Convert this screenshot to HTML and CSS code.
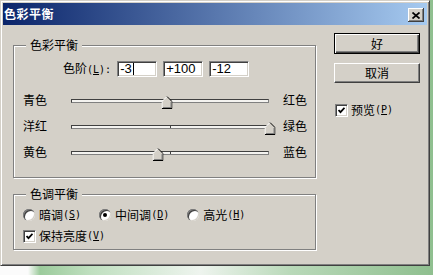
FILE: index.html
```html
<!DOCTYPE html>
<html lang="zh-CN">
<head>
    <meta charset="UTF-8">
    <title>色彩平衡</title>
    <link rel="stylesheet" href="styles.css">
</head>
<body>
    <div class="window">
        <div class="titlebar">
            <span class="title">色彩平衡</span>
            <div class="close">
                <svg width="8" height="7" viewBox="0 0 8 7"><path d="M0.5 0.5 L7.5 6.5 M7.5 0.5 L0.5 6.5" stroke="#000" stroke-width="1.7"/></svg>
            </div>
        </div>
        <div class="dialog">
            <div class="main">
                <fieldset class="group group-color">
                    <legend>色彩平衡</legend>
                    <div class="levels">
                        <label>色阶<span class="en">(<u>L</u>):</span></label>
                        <div class="field">-3<span class="caret"></span></div>
                        <div class="field">+100</div>
                        <div class="field">-12</div>
                    </div>
                    <div class="slider-row">
                        <span>青色</span>
                        <div class="slider">
                            <div class="track"><span class="tick"></span></div>
                            <div class="thumb" style="left: 48.5%">
                                <svg width="11" height="13" viewBox="0 0 11 13"><path d="M0.5 12.5 V5.5 L5.5 0.5 L10.5 5.5 V12.5 Z" fill="#d4d0c8"/><path d="M0.5 12 V5.5 L5.5 0.5" fill="none" stroke="#fff"/><path d="M5.5 0.5 L10.5 5.5 V12.5 H0.5" fill="none" stroke="#000"/><path d="M9.5 6 V11.5 H1.5" fill="none" stroke="#808080"/></svg>
                            </div>
                        </div>
                        <span class="right">红色</span>
                    </div>
                    <div class="slider-row">
                        <span>洋红</span>
                        <div class="slider">
                            <div class="track"><span class="tick"></span></div>
                            <div class="thumb" style="left: 100%">
                                <svg width="11" height="13" viewBox="0 0 11 13"><path d="M0.5 12.5 V5.5 L5.5 0.5 L10.5 5.5 V12.5 Z" fill="#d4d0c8"/><path d="M0.5 12 V5.5 L5.5 0.5" fill="none" stroke="#fff"/><path d="M5.5 0.5 L10.5 5.5 V12.5 H0.5" fill="none" stroke="#000"/><path d="M9.5 6 V11.5 H1.5" fill="none" stroke="#808080"/></svg>
                            </div>
                        </div>
                        <span class="right">绿色</span>
                    </div>
                    <div class="slider-row">
                        <span>黄色</span>
                        <div class="slider">
                            <div class="track"><span class="tick"></span></div>
                            <div class="thumb" style="left: 44%">
                                <svg width="11" height="13" viewBox="0 0 11 13"><path d="M0.5 12.5 V5.5 L5.5 0.5 L10.5 5.5 V12.5 Z" fill="#d4d0c8"/><path d="M0.5 12 V5.5 L5.5 0.5" fill="none" stroke="#fff"/><path d="M5.5 0.5 L10.5 5.5 V12.5 H0.5" fill="none" stroke="#000"/><path d="M9.5 6 V11.5 H1.5" fill="none" stroke="#808080"/></svg>
                            </div>
                        </div>
                        <span class="right">蓝色</span>
                    </div>
                </fieldset>

                <fieldset class="group group-tone">
                    <legend>色调平衡</legend>
                    <div class="radios">
                        <div class="option"><span class="radio"></span>暗调<span class="en">(<u>S</u>)</span></div>
                        <div class="option"><span class="radio on"></span>中间调<span class="en">(<u>D</u>)</span></div>
                        <div class="option"><span class="radio"></span>高光<span class="en">(<u>H</u>)</span></div>
                    </div>
                    <div class="option keep">
                        <span class="check"><svg width="7" height="7" viewBox="0 0 7 7"><path d="M0.5 3 L2.5 5.2 L6.5 0.8" stroke="#000" stroke-width="1.8" fill="none"/></svg></span>保持亮度<span class="en">(<u>V</u>)</span>
                    </div>
                </fieldset>
            </div>

            <div class="side">
                <div class="btn default">好</div>
                <div class="btn">取消</div>
                <div class="option preview">
                    <span class="check"><svg width="7" height="7" viewBox="0 0 7 7"><path d="M0.5 3 L2.5 5.2 L6.5 0.8" stroke="#000" stroke-width="1.8" fill="none"/></svg></span>预览<span class="en">(<u>P</u>)</span>
                </div>
            </div>
        </div>
    </div>
</body>
</html>
```

FILE: styles.css
```css
body {
    margin: 0;
    width: 433px;
    height: 275px;
    overflow: hidden;
    background: linear-gradient(to right, #fbfbfb 0, #fbfbfb 28px, #9ccb9c 40px, #bfdfbf 90px, #eef4ee 200px, #b9d9b9 290px, #8fbf8f 433px);
    font-family: "Noto Sans CJK SC", sans-serif;
    font-size: 12px;
    line-height: 14px;
    color: #000;
}
.window {
    box-sizing: border-box;
    width: 430px;
    height: 266px;
    padding: 2px;
    background: #d4d0c8;
    border: 1px solid;
    border-color: #d4d0c8 #404040 #404040 #d4d0c8;
    box-shadow: inset 1px 1px 0 #fff, inset -1px -1px 0 #808080;
}
.titlebar {
    display: flex;
    align-items: center;
    justify-content: space-between;
    height: 22px;
    padding: 0 3px 0 1px;
    background: linear-gradient(to right, #0a246a, #a6caf0);
}
.title {
    color: #fff;
    font-weight: bold;
    letter-spacing: 0.5px;
}
.close {
    box-sizing: border-box;
    width: 16px;
    height: 14px;
    margin-top: 2px;
    display: flex;
    align-items: center;
    justify-content: center;
    background: #d4d0c8;
    box-shadow: inset -1px -1px 0 #404040, inset 1px 1px 0 #fff, inset -2px -2px 0 #808080;
}
.dialog {
    display: flex;
    padding: 8px 0 0 10px;
}
.main {
    width: 303px;
}
.group {
    box-sizing: border-box;
    width: 303px;
    min-width: 0;
    margin: 0;
    padding: 0;
    border: 1px solid #808080;
    box-shadow: 1px 1px 0 #fff, inset 1px 1px 0 #fff;
}
.group legend {
    margin-left: 12px;
    padding: 0 4px;
    line-height: 14px;
    background: #d4d0c8;
}
.group-color {
    margin-top: 5px;
    padding-bottom: 12px;
}
.group-tone {
    margin-top: 9px;
    padding-bottom: 5px;
}
.en {
    font-family: "DejaVu Sans Mono", monospace;
    font-size: 10px;
}

/* 色阶 */
.levels {
    display: flex;
    align-items: center;
    gap: 6px;
    height: 16px;
    margin-top: 9px;
    padding-left: 49px;
}
.field {
    box-sizing: border-box;
    width: 40px;
    height: 16px;
    padding-left: 2px;
    background: #fff;
    border: 1px solid;
    border-color: #808080 #fff #fff #808080;
    box-shadow: inset 1px 1px 0 #404040, inset -1px -1px 0 #d4d0c8;
    font-family: "Liberation Sans", sans-serif;
    font-size: 13px;
    line-height: 14px;
}
.caret {
    display: inline-block;
    width: 1px;
    height: 12px;
    margin-left: 1px;
    vertical-align: -2px;
    background: #000;
}

/* sliders */
.slider-row {
    display: grid;
    grid-template-columns: 47px 200px auto;
    align-items: center;
    height: 26px;
    padding-left: 9px;
}
.slider-row:first-of-type {
    margin-top: 10px;
}
.levels + .slider-row {
    margin-top: 10px;
}
.right {
    margin-left: 13px;
}
.slider {
    position: relative;
    height: 26px;
}
.track {
    position: relative;
    box-sizing: border-box;
    height: 4px;
    margin: 12px 1px 0;
    background: #f4f3f0;
    border: 1px solid;
    border-color: #404040 #808080 #808080 #404040;
}
.tick {
    position: absolute;
    left: 98px;
    top: 0;
    width: 1px;
    height: 2px;
    background: #404040;
}
.thumb {
    position: absolute;
    top: 9px;
    width: 11px;
    height: 13px;
    transform: translateX(-50%);
}
.thumb svg {
    display: block;
}

/* tone */
.radios {
    display: flex;
    gap: 18px;
    height: 16px;
    margin-top: 6px;
    padding-left: 9px;
}
.option {
    display: flex;
    align-items: center;
    height: 16px;
}
.radio {
    display: flex;
    align-items: center;
    justify-content: center;
    width: 12px;
    height: 12px;
    margin-right: 4px;
    border-radius: 50%;
    background: #fff;
    box-shadow: inset 1px 1px 0 #808080, inset 2px 2px 0 #404040, inset -1px -1px 0 #d4d0c8;
}
.radio.on::after {
    content: "";
    width: 4px;
    height: 4px;
    border-radius: 50%;
    background: #000;
}
.check {
    box-sizing: border-box;
    display: flex;
    align-items: center;
    justify-content: center;
    width: 13px;
    height: 13px;
    margin-right: 3px;
    background: #fff;
    border: 1px solid;
    border-color: #808080 #fff #fff #808080;
    box-shadow: inset 1px 1px 0 #404040, inset -1px -1px 0 #d4d0c8;
}
.keep {
    margin-top: 5px;
    padding-left: 9px;
}

/* buttons */
.side {
    width: 86px;
    margin-left: 18px;
}
.btn {
    box-sizing: border-box;
    display: flex;
    align-items: center;
    justify-content: center;
    height: 20px;
    background: #d4d0c8;
    border: 1px solid;
    border-color: #fff #404040 #404040 #fff;
    box-shadow: inset -1px -1px 0 #808080;
}
.btn.default {
    height: 21px;
    border-color: #000;
    box-shadow: inset 1px 1px 0 #fff, inset -1px -1px 0 #404040, inset -2px -2px 0 #808080;
}
.btn + .btn {
    margin-top: 9px;
}
.preview {
    margin-top: 19px;
    padding-left: 1px;
}
```
